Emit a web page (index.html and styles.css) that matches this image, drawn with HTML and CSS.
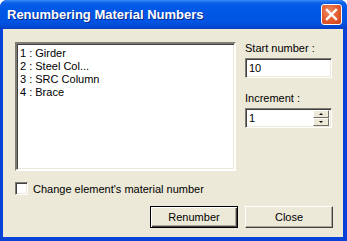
FILE: index.html
```html
<!DOCTYPE html>
<html lang="en">
<head>
  <meta charset="UTF-8" />
  <title>Renumbering Material Numbers</title>
  <link rel="stylesheet" href="styles.css">
</head>
<body>
  <div class="window">
    <div class="titlebar">
      <span class="title">Renumbering Material Numbers</span>
      <button class="close-x" aria-label="Close">
        <svg width="13" height="13" viewBox="0 0 13 13">
          <path d="M2 2 L11 11 M11 2 L2 11" stroke="#fff" stroke-width="2.4" stroke-linecap="square"/>
        </svg>
      </button>
    </div>

    <div class="client">
      <div class="top">
        <ul class="listbox">
          <li>1 : Girder</li>
          <li>2 : Steel Col...</li>
          <li>3 : SRC Column</li>
          <li>4 : Brace</li>
        </ul>

        <div class="side">
          <label class="field-label">Start number :</label>
          <div class="edit">10</div>
          <label class="field-label second">Increment :</label>
          <div class="edit spin">
            <span>1</span>
            <div class="spinner">
              <div class="spin-btn"><i class="up"></i></div>
              <div class="spin-btn"><i class="down"></i></div>
            </div>
          </div>
        </div>
      </div>

      <label class="check-row">
        <span class="checkbox"></span>
        Change element's material number
      </label>

      <div class="buttons">
        <button class="btn default">Renumber</button>
        <button class="btn">Close</button>
      </div>
    </div>
  </div>
</body>
</html>
```

FILE: styles.css
```css
body {
  margin: 0;
  width: 347px;
  height: 241px;
  overflow: hidden;
  font-family: "Liberation Sans", Arial, sans-serif;
  font-size: 11px;
  color: #000;
}
.window {
  width: 347px;
  height: 241px;
  background: #0842d6;
  border-radius: 7px 7px 0 0;
  display: flex;
  flex-direction: column;
}
.titlebar {
  height: 29px;
  display: flex;
  align-items: center;
  justify-content: space-between;
  padding: 0 5px 0 7px;
  border-radius: 7px 7px 0 0;
  background: linear-gradient(to bottom, #3c8cf8 0px, #0a5fe8 3px, #0058e6 8px, #0054e3 22px, #0047d0 27px, #0a3fc2 29px);
}
.title {
  color: #fff;
  font-weight: bold;
  font-size: 13px;
  text-shadow: 1px 1px 0 #0a2a8a;
  letter-spacing: 0;
}
.close-x {
  width: 21px;
  height: 21px;
  padding: 0;
  border: 1px solid #fff;
  border-radius: 3px;
  background: radial-gradient(circle at 40% 35%, #f08a64 0%, #e25a2c 55%, #c8401a 100%);
  display: flex;
  align-items: center;
  justify-content: center;
}
.client {
  flex: 1;
  margin: 0 4px 4px 3px;
  background: #ece9d8;
  padding: 13px 0 0 12px;
}
.top {
  display: flex;
}
.listbox {
  list-style: none;
  margin: 0;
  padding: 3px 0 0 3px;
  width: 221px;
  height: 129px;
  box-sizing: border-box;
  background: #fff;
  border: 2px solid;
  border-color: #7f7d73 #fff #fff #7f7d73;
  box-shadow: inset 1px 1px 0 #404040, inset -1px -1px 0 #ece9d8;
}
.listbox li {
  height: 13px;
  line-height: 13px;
}
.side {
  margin-left: 9px;
  width: 87px;
  display: flex;
  flex-direction: column;
}
.field-label {
  height: 13px;
  line-height: 13px;
  margin-bottom: 3px;
}
.field-label.second {
  margin-top: 14px;
}
.edit {
  height: 20px;
  box-sizing: border-box;
  background: #fff;
  border: 1px solid;
  border-color: #7f7d73 #fff #fff #7f7d73;
  box-shadow: inset 1px 1px 0 #404040, inset -1px -1px 0 #ece9d8;
  padding: 0 0 0 3px;
  line-height: 18px;
  display: flex;
  align-items: center;
  justify-content: space-between;
}
.spin {
  padding-right: 2px;
}
.spinner {
  display: flex;
  flex-direction: column;
  width: 16px;
  height: 16px;
}
.spin-btn {
  flex: 1;
  background: #ece9d8;
  border: 1px solid;
  border-color: #fff #716f64 #716f64 #fff;
  display: flex;
  align-items: center;
  justify-content: center;
}
.spin-btn i {
  width: 0;
  height: 0;
  border-left: 2px solid transparent;
  border-right: 2px solid transparent;
}
.spin-btn i.up {
  border-bottom: 2px solid #000;
}
.spin-btn i.down {
  border-top: 2px solid #000;
}
.check-row {
  display: flex;
  align-items: center;
  margin-top: 11px;
  height: 13px;
}
.checkbox {
  width: 13px;
  height: 13px;
  box-sizing: border-box;
  background: #fff;
  border: 1px solid;
  border-color: #7f7d73 #fff #fff #7f7d73;
  box-shadow: inset 1px 1px 0 #404040, inset -1px -1px 0 #ece9d8;
  margin-right: 5px;
}
.buttons {
  display: flex;
  justify-content: flex-end;
  gap: 7px;
  margin-top: 11px;
  padding-right: 10px;
}
.btn {
  width: 88px;
  height: 22px;
  padding: 0;
  font-family: "Liberation Sans", Arial, sans-serif;
  font-size: 11px;
  color: #000;
  background: #ece9d8;
  border: 1px solid;
  border-color: #fff #404040 #404040 #fff;
  box-shadow: inset -1px -1px 0 #aca899;
}
.btn.default {
  border: 1px solid #000;
  box-shadow: inset 1px 1px 0 #fff, inset -1px -1px 0 #404040, inset -2px -2px 0 #aca899;
}
```
